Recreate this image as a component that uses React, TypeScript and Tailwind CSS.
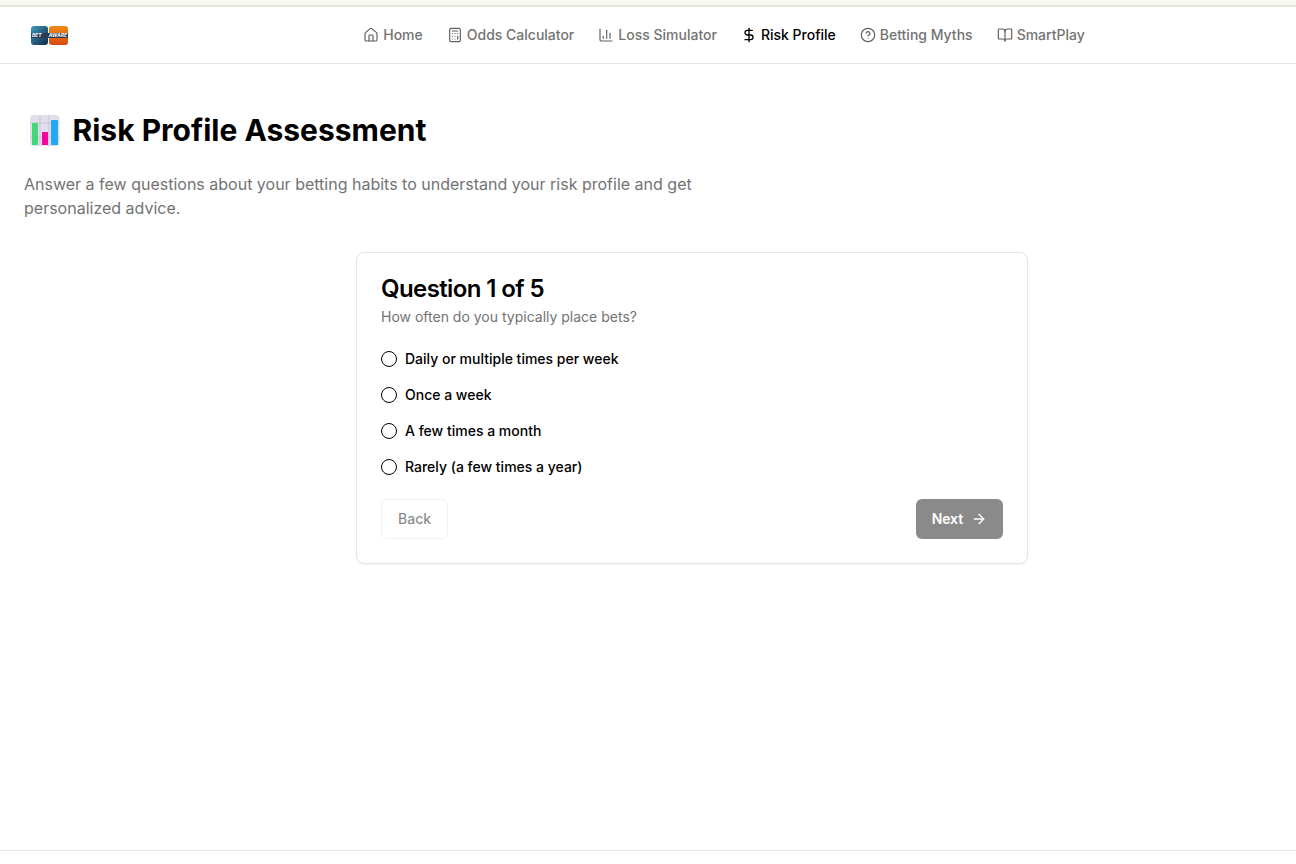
import { ArrowRight, BarChart3, BookOpen, Calculator, CircleHelp, DollarSign, Home } from "lucide-react";

const navItems = [
  { label: "Home", icon: Home },
  { label: "Odds Calculator", icon: Calculator },
  { label: "Loss Simulator", icon: BarChart3 },
  { label: "Risk Profile", icon: DollarSign, active: true },
  { label: "Betting Myths", icon: CircleHelp },
  { label: "SmartPlay", icon: BookOpen },
];

const answers = [
  "Daily or multiple times per week",
  "Once a week",
  "A few times a month",
  "Rarely (a few times a year)",
];

function Logo() {
  return (
    <div className="relative flex h-[19px] w-[37px] gap-px">
      <div className="h-full w-[17px] rounded-[3px] bg-gradient-to-br from-[#3f9cbc] to-[#0f2a4d]" />
      <div className="h-full w-[19px] rounded-[3px] bg-gradient-to-b from-[#ee8a12] to-[#d9480f]" />
      <div className="absolute left-0 top-[7px] flex h-[5px] w-[37px] items-center justify-between bg-[#2a3a55] px-px text-[5px] font-bold italic leading-none text-white">
        <span>BET</span>
        <span>AWARE</span>
      </div>
    </div>
  );
}

function ChartEmoji() {
  return (
    <svg width="36" height="36" viewBox="0 0 36 36" className="shrink-0">
      <rect x="6" y="3" width="29.5" height="31" rx="4" fill="#e2deeb" />
      <path d="M6 11h29.5M6 25h29.5M16 3v31M25 3v31" stroke="#c9c5d3" strokeWidth="1" />
      <rect x="8" y="11" width="6" height="22" rx="0.5" fill="#43d67a" />
      <rect x="18" y="20" width="6" height="13" rx="0.5" fill="#f5059b" />
      <rect x="27" y="8" width="7" height="25" rx="0.5" fill="#22a9f2" />
    </svg>
  );
}

export default function App() {
  return (
    <div className="flex min-h-[864px] flex-col bg-white font-['Inter',sans-serif] text-black">
      <div className="h-[7px] border-b-2 border-[#e6e7d8] bg-[#f8f9f0]" />
      <header className="flex h-[57px] items-center border-b border-[#e5e5e5]">
        <div className="w-[152px] pl-[31px]">
          <Logo />
        </div>
        <nav className="flex flex-1 items-center justify-center gap-6 text-sm">
          {navItems.map((item) => {
            const Icon = item.icon;
            return (
              <a
                key={item.label}
                className={`flex items-center gap-1 font-medium ${item.active ? "text-black" : "text-[#737373]"}`}
              >
                <Icon size={16} strokeWidth={item.active ? 2 : 1.75} className={item.active ? "text-black" : "text-[#5f5f5f]"} />
                {item.label}
              </a>
            );
          })}
        </nav>
      </header>

      <main className="flex-1 px-6 pt-12">
        <h1 className="flex items-center gap-[12.5px] text-3xl font-bold leading-9">
          <ChartEmoji />
          Risk Profile Assessment
        </h1>
        <p className="mt-6 max-w-2xl text-base leading-6 text-[#737373]">
          Answer a few questions about your betting habits to understand your risk profile and get personalized advice.
        </p>

        <section className="ml-[332px] mt-8 w-[672px] rounded-lg border border-[#e5e5e5] bg-white p-6 shadow-xs">
          <h2 className="text-2xl font-semibold leading-6 tracking-tight">Question 1 of 5</h2>
          <p className="mt-1.5 text-sm leading-5 text-[#737373]">How often do you typically place bets?</p>

          <div className="mt-[22px] flex flex-col gap-4">
            {answers.map((answer) => (
              <label key={answer} className="flex h-5 items-center gap-2 text-sm font-medium">
                <span className="h-4 w-4 rounded-full border border-black" />
                {answer}
              </label>
            ))}
          </div>

          <div className="mt-[22px] flex items-center justify-between">
            <button className="h-10 rounded-md border border-[#e5e5e5] px-4 text-sm font-medium opacity-50">
              <span className="text-[#171717]">Back</span>
            </button>
            <button className="flex h-10 items-center gap-2 rounded-md bg-[#171717] px-4 text-sm font-semibold tracking-[-0.1px] text-white opacity-50">
              Next
              <ArrowRight size={16} />
            </button>
          </div>
        </section>
      </main>

      <footer className="h-[14px] border-t border-[#e5e5e5]" />
    </div>
  );
}
